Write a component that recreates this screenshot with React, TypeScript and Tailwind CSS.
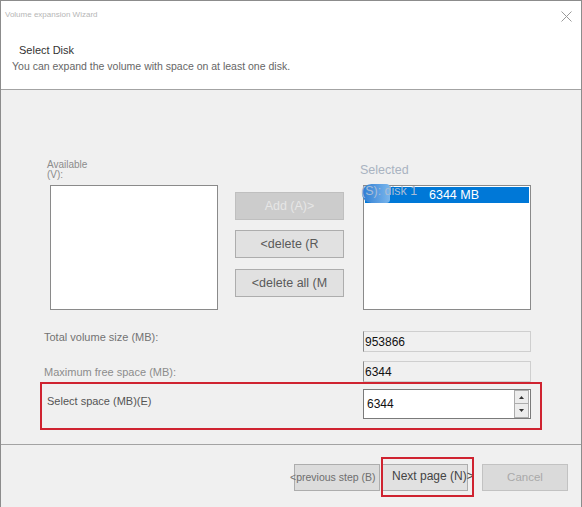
import React from "react";

function GrayButton({
  children,
  disabled,
  className = "",
}: {
  children: React.ReactNode;
  disabled?: boolean;
  className?: string;
}) {
  return (
    <div
      className={
        "w-[109px] h-[28px] flex items-center justify-center whitespace-nowrap text-[12.5px] border " +
        (disabled
          ? "bg-[#cccccc] border-[#bfbfbf] text-[#e6e6e6]"
          : "bg-[#e1e1e1] border-[#adadad] text-[#5a5a5a]") +
        " " +
        className
      }
    >
      {children}
    </div>
  );
}

function ReadOnlyField({ value }: { value: string }) {
  return (
    <div className="w-[168px] h-[21px] flex items-center pl-[1px] bg-[#f0f0f0] border border-[#cfcfcf] border-l-[#8c8c8c] text-[12px] text-[#111]">
      {value}
    </div>
  );
}

export default function App() {
  return (
    <div className="w-[582px] h-[507px] flex flex-col bg-[#f0f0f0] border border-b-0 border-[#8c8c8c] font-['Liberation_Sans',Arial,sans-serif] overflow-hidden">
      {/* header */}
      <div className="h-[89px] shrink-0 bg-white border-b border-[#a3a3a3]">
        <div className="flex items-start justify-between pl-[4px] pr-[9px] pt-[9px]">
          <span className="text-[8px] leading-[10px] text-[#b6b6b6]">
            Volume expansion Wizard
          </span>
          <svg width="11" height="11" viewBox="0 0 11 11" className="mt-[1px]">
            <path d="M0.5 0.5 L10.5 10.5 M10.5 0.5 L0.5 10.5" stroke="#9a9a9a" strokeWidth="1" />
          </svg>
        </div>
        <div className="mt-[22px] pl-[18px] text-[11px] leading-[13px] text-[#333]">
          Select Disk
        </div>
        <div className="mt-[3px] pl-[11px] text-[10.5px] leading-[12px] text-[#666]">
          You can expand the volume with space on at least one disk.
        </div>
      </div>

      {/* body */}
      <div className="flex-1 flex flex-col">
        <div className="mt-[70px] flex items-start">
          <div className="ml-[46px] w-[171px]">
            <div className="h-[25px] text-[10px] leading-[9.5px] text-[#8c8c8c]">
              Available
              <br />
              (V):
            </div>
            <div className="ml-[3px] w-[168px] h-[125px] bg-white border border-[#8a8a8a]" />
          </div>

          <div className="ml-[17px] pt-[32px] flex flex-col">
            <GrayButton disabled>Add (A)&gt;</GrayButton>
            <GrayButton className="mt-[10px]">&lt;delete (R</GrayButton>
            <GrayButton className="mt-[11px]">&lt;delete all (M</GrayButton>
          </div>

          <div className="ml-[16px] w-[171px]">
            <div className="h-[25px] pt-[3px] text-[12.5px] leading-[14px] text-[#a9b3c1]">
              Selected
            </div>
            <div className="relative ml-[3px] w-[168px] h-[125px] bg-white border border-[#8a8a8a] pt-[1px] px-[1px]">
              <div className="h-[16px] bg-[#0078d7] flex items-center pl-[64px] text-[12.5px] text-white">
                6344 MB
              </div>
              <div className="absolute left-[-2px] top-[-2px] w-[28px] h-[19px] rounded-l-[10px] rounded-r-[4px] bg-linear-to-r from-[#2a7cd2] to-[#7ab6ec]" />
              <div className="absolute left-[-3px] top-[-2px] text-[12.5px] leading-[15px] text-[#a9bdd6] whitespace-nowrap">
                (S): disk 1
              </div>
            </div>
          </div>
        </div>

        <div className="mt-[21px] flex items-start">
          <div className="ml-[43px] w-[319px] text-[11px] leading-[13px] text-[#737373]">
            Total volume size (MB):
          </div>
          <ReadOnlyField value="953866" />
        </div>

        <div className="mt-[9px] flex items-start">
          <div className="ml-[43px] w-[319px] pt-[5px] text-[11px] leading-[13px] text-[#8c8c8c]">
            Maximum free space (MB):
          </div>
          <ReadOnlyField value="6344" />
        </div>

        <div className="ml-[39px] w-[502px] h-[48px] border-2 border-[#cf2330] flex items-start">
          <div className="w-[321px] pl-[5px] pt-[11px] text-[11px] leading-[13px] text-[#555]">
            Select space (MB)(E)
          </div>
          <div className="mt-[5px] w-[168px] h-[30px] bg-white border border-[#7a7a7a] flex">
            <div className="flex-1 flex items-center pl-[3px] text-[12px] text-[#111]">6344</div>
            <div className="w-[15px] mr-[1px] flex flex-col">
              <div className="h-[14px] bg-[#ececec] border border-[#acacac] flex items-center justify-center">
                <svg width="5" height="3" viewBox="0 0 5 3">
                  <path d="M2.5 0 L5 3 L0 3 Z" fill="#333" />
                </svg>
              </div>
              <div className="h-[14px] bg-[#ececec] border border-t-0 border-[#acacac] flex items-center justify-center">
                <svg width="5" height="3" viewBox="0 0 5 3">
                  <path d="M0 0 L5 0 L2.5 3 Z" fill="#333" />
                </svg>
              </div>
            </div>
          </div>
        </div>
      </div>

      {/* footer */}
      <div className="h-[63px] shrink-0 border-t border-[#a3a3a3] flex justify-end items-start pt-[19px] pr-[13px]">
        <div className="w-[86px] h-[27px] bg-[#dcdcdc] border border-[#adadad] flex items-center justify-start whitespace-nowrap text-[10.5px] text-[#6e6e6e]">
          <span className="-ml-[5px]">&lt;previous step (B)</span>
        </div>
        <div className="relative ml-[2px] w-[86px] h-[27px] bg-[#e1e1e1] border border-[#adadad] flex items-center justify-start whitespace-nowrap text-[12px] text-[#444]">
          <span className="pl-[9px] -mt-[3px]">Next page (N)&gt;</span>
          <div className="absolute left-[-2px] top-[-8px] w-[93px] h-[40px] border-2 border-[#cf2330]" />
        </div>
        <div className="ml-[14px] w-[86px] h-[27px] bg-[#dadada] border border-[#c2c2c2] flex items-center justify-center text-[11.5px] text-[#a9a9a9]">
          Cancel
        </div>
      </div>
    </div>
  );
}
